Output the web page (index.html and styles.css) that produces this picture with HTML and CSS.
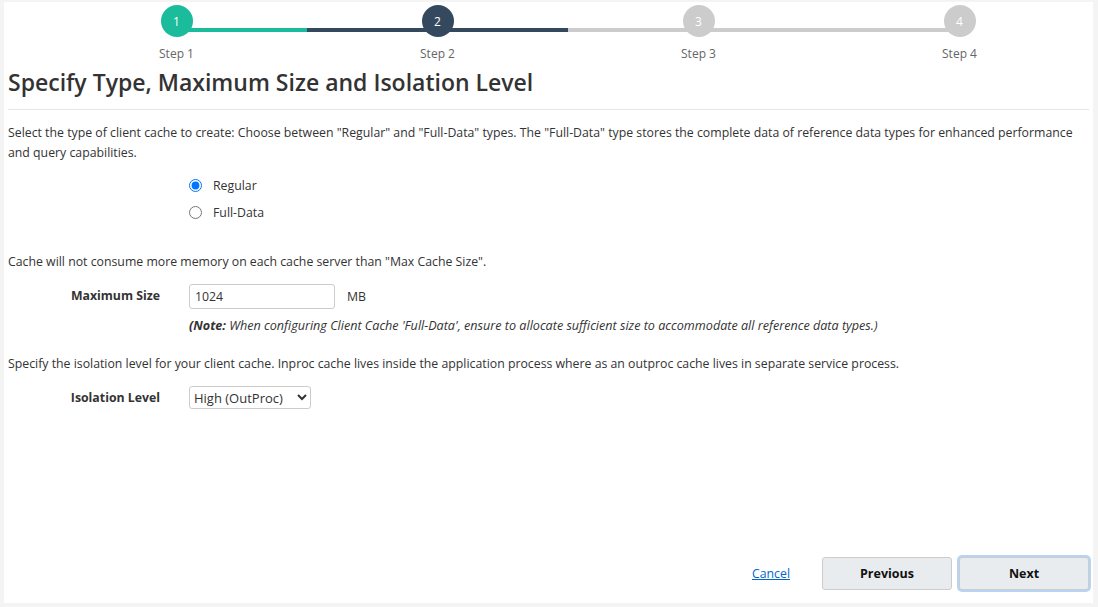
FILE: index.html
```html
<!DOCTYPE html>
<html lang="en">
<head>
    <meta charset="UTF-8">
    <meta name="viewport" content="width=device-width, initial-scale=1.0">
    <title>Client Cache Wizard</title>
    <link rel="stylesheet" href="styles.css">
</head>
<body>
    <div class="wizard">
        <div class="steps">
            <div class="step done">
                <span class="circle">1</span>
                <span class="step-label">Step 1</span>
            </div>
            <div class="step active">
                <span class="circle">2</span>
                <span class="step-label">Step 2</span>
            </div>
            <div class="step">
                <span class="circle">3</span>
                <span class="step-label">Step 3</span>
            </div>
            <div class="step last">
                <span class="circle">4</span>
                <span class="step-label">Step 4</span>
            </div>
        </div>

        <h1>Specify Type, Maximum Size and Isolation Level</h1>

        <p class="help">Select the type of client cache to create: Choose between "Regular" and "Full-Data" types. The "Full-Data" type stores the complete data of reference data types for enhanced performance and query capabilities.</p>
        <div class="radios">
            <label class="radio"><input type="radio" name="type" checked> Regular</label>
            <label class="radio"><input type="radio" name="type"> Full-Data</label>
        </div>

        <p class="help">Cache will not consume more memory on each cache server than "Max Cache Size".</p>
        <div class="form-row">
            <label class="form-label" for="max-size">Maximum Size</label>
            <div class="form-field">
                <div class="size-line">
                    <input type="text" id="max-size" class="text-input" value="1024">
                    <span class="unit">MB</span>
                </div>
                <div class="note"><b>(Note:</b> When configuring Client Cache 'Full-Data', ensure to allocate sufficient size to accommodate all reference data types.)</div>
            </div>
        </div>

        <p class="help">Specify the isolation level for your client cache. Inproc cache lives inside the application process where as an outproc cache lives in separate service process.</p>
        <div class="form-row iso-row">
            <label class="form-label" for="isolation">Isolation Level</label>
            <div class="form-field">
                <select id="isolation" class="select">
                    <option>High (OutProc)</option>
                    <option>Low (InProc)</option>
                </select>
            </div>
        </div>

        <div class="footer">
            <a href="#" class="cancel">Cancel</a>
            <button class="btn">Previous</button>
            <button class="btn focused">Next</button>
        </div>
    </div>
</body>
</html>
```

FILE: styles.css
```css
html, body {
    height: 100%;
}
body {
    margin: 0;
    background-color: #f4f4f4;
    font-family: "Open Sans", "Noto Sans", sans-serif;
    font-size: 12.3px;
    color: #333;
    padding: 2px 5px 4px 4px;
    box-sizing: border-box;
}
.wizard {
    background: white;
    height: 100%;
    padding: 0 4px 0 4px;
    box-sizing: border-box;
    display: flex;
    flex-direction: column;
}
.steps {
    display: grid;
    grid-template-columns: repeat(4, 261px);
    margin-left: 38px;
    padding-top: 3px;
}
.step {
    position: relative;
    display: flex;
    flex-direction: column;
    align-items: center;
}
.step::after {
    content: "";
    position: absolute;
    top: 23px;
    left: 0;
    right: 0;
    height: 4px;
    background: #ccc;
}
.step:first-child::after {
    background: linear-gradient(to right, transparent 50%, #1abc9c 50%);
}
.step.active::after {
    background: #34495e;
}
.step.last::after {
    background: linear-gradient(to right, #ccc 50%, transparent 50%);
}
.circle {
    position: relative;
    z-index: 1;
    width: 32px;
    height: 32px;
    border-radius: 50%;
    background: #ccc;
    color: white;
    font-size: 12px;
    display: flex;
    align-items: center;
    justify-content: center;
}
.done .circle {
    background: #1abc9c;
}
.active .circle {
    background: #34495e;
}
.step-label {
    margin-top: 8px;
    color: #666;
    font-size: 12px;
}
h1 {
    font-size: 23px;
    font-weight: 600;
    margin: 4px 0 0 0;
    padding-bottom: 11px;
    border-bottom: 1px solid #e5e5e5;
    color: #333;
}
.help {
    margin: 13px 0 0 0;
    line-height: 20px;
}
.radios {
    margin: 14px 0 0 181px;
    display: flex;
    flex-direction: column;
    gap: 10px;
}
.radio {
    display: flex;
    align-items: center;
    gap: 11px;
}
.radio input {
    margin: 0;
    width: 13px;
    height: 13px;
}
.radios + .help {
    margin-top: 31px;
}
.form-row {
    display: flex;
    margin-top: 12px;
}
.form-label {
    width: 152px;
    text-align: right;
    font-weight: bold;
    padding-top: 3px;
    flex-shrink: 0;
}
.form-field {
    margin-left: 29px;
}
.size-line {
    display: flex;
    align-items: center;
}
.text-input {
    width: 146px;
    height: 25px;
    box-sizing: border-box;
    border: 1px solid #ccc;
    border-radius: 3px;
    padding: 2px 5px;
    font: inherit;
    color: #333;
}
.unit {
    margin-left: 12px;
}
.note {
    margin-top: 8px;
    font-style: italic;
    font-size: 12.6px;
}
.form-row + .help {
    margin-top: 20px;
}
.iso-row {
    margin-top: 12px;
}
.select {
    width: 122px;
    height: 23px;
    font: inherit;
    font-size: 13px;
    color: #333;
    border: 1px solid #ccc;
    border-radius: 3px;
    background: white;
}
.footer {
    margin-top: auto;
    display: flex;
    justify-content: flex-end;
    align-items: center;
    gap: 7px;
    padding-bottom: 13px;
}
.cancel {
    color: #0066cc;
    margin-right: 25px;
}
.btn {
    width: 130px;
    height: 33px;
    background: #e9ecef;
    border: 1px solid #ccc;
    border-radius: 3px;
    font-family: "Open Sans", "Noto Sans", sans-serif;
    font-weight: bold;
    font-size: 12.5px;
    color: #111;
}
.btn.focused {
    box-shadow: 0 0 0 2px #b8d4f5;
}
```
